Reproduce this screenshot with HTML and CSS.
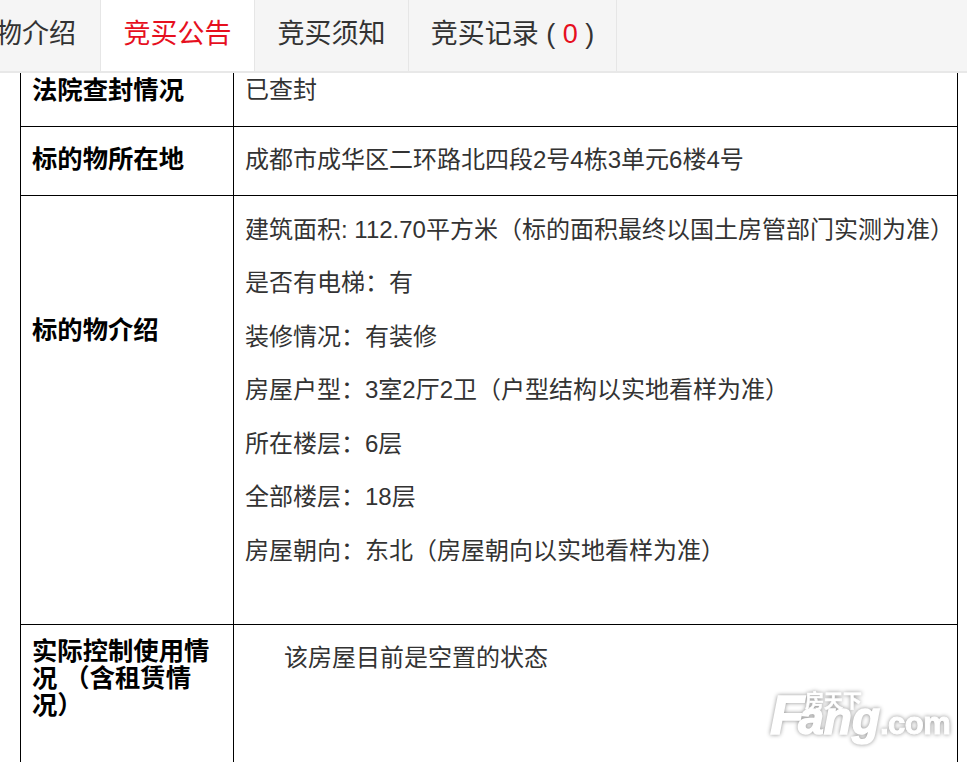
FILE: index.html
```html
<!DOCTYPE html>
<html lang="zh-CN">
<head>
<meta charset="utf-8">
<title>竞买公告</title>
<link rel="stylesheet" href="styles.css">
</head>
<body>
<nav class="tabs">
  <a class="tab tab-first">物介绍</a>
  <a class="tab tab-active">竞买公告</a>
  <a class="tab">竞买须知</a>
  <a class="tab tab-last">竞买记录 ( <span class="count">0</span> )</a>
</nav>
<main class="content">
  <table class="info">
    <colgroup><col class="col-label"><col class="col-value"></colgroup>
    <tr class="row-court">
      <th>法院查封情况</th>
      <td>已查封</td>
    </tr>
    <tr class="row-location">
      <th>标的物所在地</th>
      <td>成都市成华区二环路北四段2号4栋3单元6楼4号</td>
    </tr>
    <tr class="row-intro">
      <th>标的物介绍</th>
      <td>
        <p>建筑面积: 112.70平方米（标的面积最终以国土房管部门实测为准）</p>
        <p>是否有电梯：有</p>
        <p>装修情况：有装修</p>
        <p>房屋户型：3室2厅2卫（户型结构以实地看样为准）</p>
        <p>所在楼层：6层</p>
        <p>全部楼层：18层</p>
        <p>房屋朝向：东北（房屋朝向以实地看样为准）</p>
      </td>
    </tr>
    <tr class="row-usage">
      <th>实际控制使用情况 （含租赁情况）</th>
      <td><p class="indent">该房屋目前是空置的状态</p></td>
    </tr>
  </table>
</main>
<div class="watermark">
  <span class="wm-cn">房天下</span>
  <span class="wm-word"><span class="wm-f">F</span>ang<span class="wm-com">.com</span></span>
</div>
</body>
</html>
```
FILE: styles.css
```css
html, body {
  margin: 0;
  padding: 0;
  height: 762px;
  overflow: hidden;
  background: #fff;
  font-family: "Liberation Sans", "Noto Sans CJK SC", sans-serif;
}
.tabs {
  display: flex;
  height: 71px;
  background: #f5f5f5;
  border-bottom: 2px solid #e8e8e8;
}
.tab {
  box-sizing: border-box;
  height: 71px;
  line-height: 68px;
  font-size: 27px;
  color: #333;
  text-align: center;
  white-space: nowrap;
  border-right: 1px solid #e6e6e6;
}
.tab-first {
  width: 101px;
  text-align: left;
  text-indent: -5px;
}
.tab-active {
  width: 154px;
  background: #fff;
  color: #e60f1e;
}
.tab-active + .tab { width: 154px; }
.tab-last { width: 208px; }
.count { color: #e60f1e; }
.content { padding-left: 20px; }
.info {
  border-collapse: collapse;
  table-layout: fixed;
  width: 938px;
  color: #333;
  font-size: 24px;
  line-height: 27px;
}
.col-label { width: 213px; }
.info th, .info td {
  border: 1px solid #000;
  vertical-align: middle;
  padding: 0 11px;
  text-align: left;
}
.info th {
  font-size: 25.33px;
  line-height: 27px;
  color: #000;
  font-weight: 700;
}
.info p {
  margin: 0 0 17.6px;
  line-height: 36px;
}
.row-court th, .row-court td { border-top: 0; }
.row-court { height: 53px; }
.row-court th { padding-bottom: 17px; }
.row-court td { padding-bottom: 19px; }
.row-location { height: 69px; }
.row-location th, .row-location td { padding-bottom: 2px; }
.row-intro { height: 429px; }
.row-intro th { padding-bottom: 159px; }
.row-intro td { vertical-align: top; padding-top: 16px; }
.row-usage { height: 160px; }
.row-usage th, .row-usage td { vertical-align: top; padding-top: 13px; }
.row-usage td { padding-top: 15px; }
.indent { text-indent: 39px; }
.watermark {
  position: absolute;
  left: 770px;
  top: 691px;
  width: 185px;
  height: 60px;
  color: #fff;
  font-family: "Liberation Sans", sans-serif;
  font-weight: 700;
  filter: drop-shadow(0 0 2px #8f8f8f);
}
.wm-cn {
  position: absolute;
  left: 35px;
  top: 2px;
  font-family: "Noto Sans CJK SC", sans-serif;
  font-size: 19px;
  line-height: 14px;
  -webkit-text-stroke: 0.5px #fff;
}
.wm-word {
  position: absolute;
  left: 0;
  top: 20px;
  font-size: 46px;
  line-height: 8px;
  white-space: nowrap;
  font-style: italic;
  -webkit-text-stroke: 1.5px #fff;
}
.wm-f {
  font-size: 56px;
  letter-spacing: -6px;
}
.wm-com {
  font-size: 31px;
  font-style: normal;
  letter-spacing: -0.5px;
  -webkit-text-stroke: 1px #fff;
}
```
